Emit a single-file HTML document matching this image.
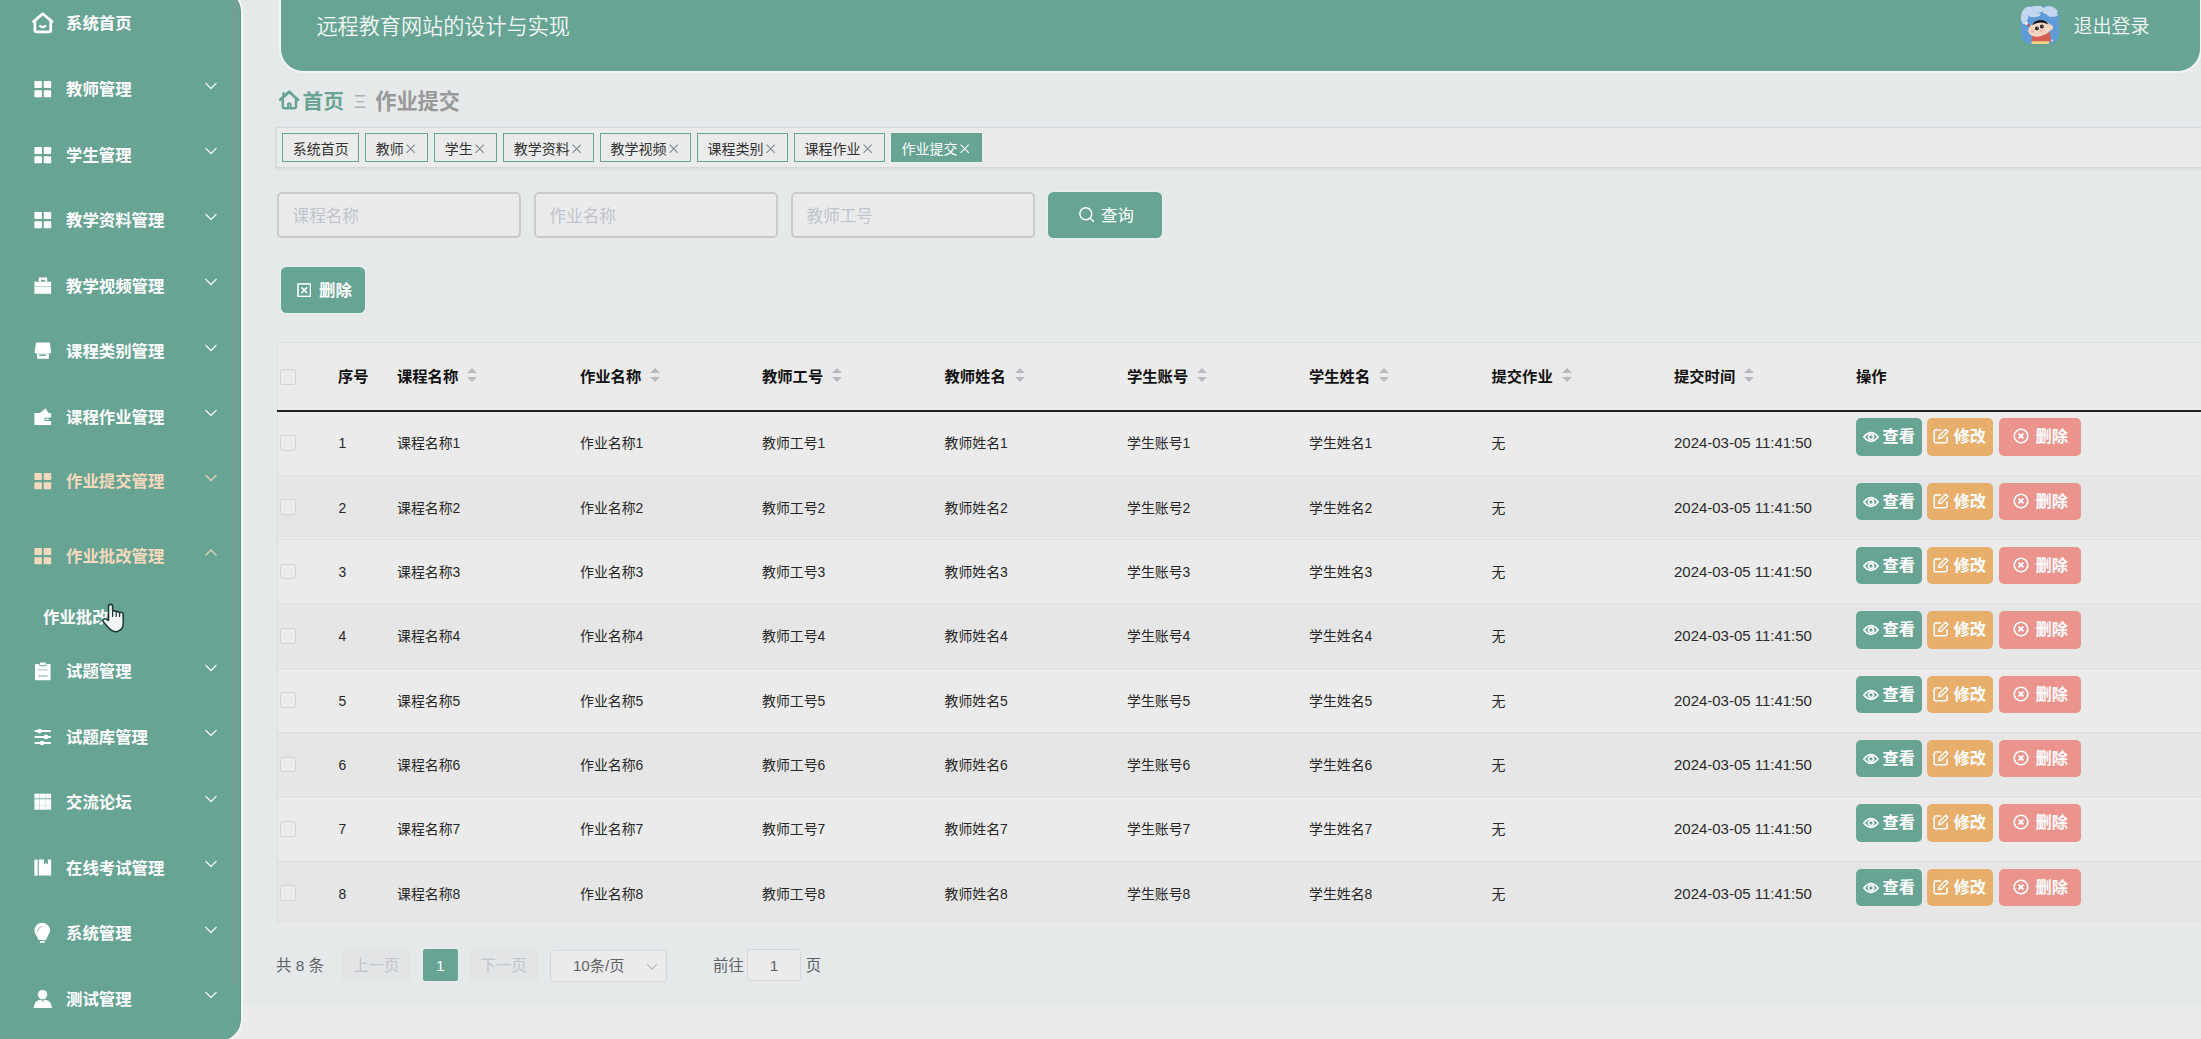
<!DOCTYPE html>
<html lang="zh-CN"><head><meta charset="utf-8"><title>远程教育网站的设计与实现</title>
<style>
*{box-sizing:border-box;margin:0;padding:0}
html,body{width:2201px;height:1039px;overflow:hidden;background:#ebebeb}
body{position:relative;font-family:"Liberation Sans","Noto Sans CJK SC",sans-serif;color:#333;-webkit-font-smoothing:antialiased}
.abs{position:absolute}
#mainbg{position:absolute;left:0;top:0;width:2201px;height:1005px;background:#e6e9ea}
#side{position:absolute;left:-3px;top:-12px;width:246px;height:1055px;background:#68a494;border:2px solid #f4f5f5;border-left:0;border-radius:0 24px 24px 0;box-shadow:-1px 0 0 0 #629789 inset}
#thumb{position:absolute;left:231.5px;top:-10px;width:6.9px;height:995.4px;border-radius:4px;background:rgba(144,147,153,.3)}
.mi{position:absolute;left:0;width:232px;height:30px;color:#fff;font-size:16.4px;font-weight:bold;line-height:30px;white-space:nowrap}
.mi .t{position:absolute;left:66px;top:0}
.mi svg.ic{position:absolute;left:28px;top:1px;width:28px;height:28px;fill:currentColor}
.mi svg.ar{position:absolute;left:204.2px;top:4.8px;width:14px;height:14px;fill:none;stroke:currentColor;stroke-width:1.3;opacity:.88}
.mi.on{color:#f4d9bc}
#head{position:absolute;left:279px;top:-30px;width:1922.6px;height:103px;background:#68a494;border:2px solid #f2f5f5;border-radius:24px}
#title{position:absolute;left:316.4px;top:11.6px;font-size:21.13px;line-height:30px;color:#f4f8f6;font-weight:350;white-space:nowrap}
#avatar{position:absolute;left:2021px;top:6px;width:38px;height:38px;border-radius:10px;overflow:hidden}
#logout{position:absolute;left:2073.6px;top:11.9px;font-size:19px;line-height:30px;color:#f4f8f6;font-weight:350;white-space:nowrap}

#bc{position:absolute;left:279px;top:86.7px;height:30px;line-height:30px;font-size:20.7px;font-weight:bold;white-space:nowrap}
#bc .h{position:absolute;left:23.5px;top:0;color:#68a494}
#bc .s{position:absolute;left:75.3px;top:0.6px;color:#aeb2b8;font-weight:normal;font-size:18px}
#bc .c{position:absolute;left:96.2px;top:0;color:#999;font-size:21.2px}
#bc svg{position:absolute;left:0;top:4px;width:21px;height:21px}
#tags{position:absolute;left:276px;top:127.2px;width:1940px;height:40.6px;background:#ebebeb;border:1px solid #d5d7db;box-shadow:0 1px 3px 0 rgba(0,0,0,.08)}
.tag{position:absolute;top:4.9px;height:29.4px;line-height:31.4px;border:1.3px solid #68a494;box-shadow:0 0 0 .8px rgba(225,245,238,.7);background:#ebebeb;color:#333;font-size:14px;white-space:nowrap;padding:0 9.5px;text-align:left}
.tag.on{background:#68a494;color:#fff}
.tag svg{position:absolute;top:10.3px;width:9.4px;height:9.4px;stroke:#7b868e;stroke-width:1.1;fill:none}
.tag.on svg{stroke:#fff}
.inp{position:absolute;top:191.8px;width:244.4px;height:46.5px;border:2px solid #cbcbcb;border-radius:5px;background:#ebebeb;color:#c0c4cc;font-size:16.6px;line-height:45px;padding-left:13.6px;white-space:nowrap}
.btn{position:absolute;background:#68a494;color:#fff;border-radius:5.5px;white-space:nowrap;box-shadow:0 0 0 1.1px rgba(228,246,240,.75)}
#q{left:1047.6px;top:192px;width:114.4px;height:46.4px;font-size:16.4px;line-height:47.6px}
#q span{position:absolute;left:53.5px;top:0}
#q svg{position:absolute;left:30.2px;top:14px;width:17px;height:17px}
#del{left:281px;top:266.7px;width:84px;height:46.2px;font-size:16.4px;line-height:47px;font-weight:bold}
#del span{position:absolute;left:38px;top:0}
#del svg{position:absolute;left:16px;top:16.2px;width:14.4px;height:14.4px}
#tb{position:absolute;left:276.5px;top:341.5px;width:1940px;height:583.8px;background:#ebebeb;border:1px solid #dcdfe0}
#thb{position:absolute;left:277px;top:409.5px;width:1940px;height:2px;background:#222}
.row{position:absolute;left:278px;width:1940px;height:64.3px;border-top:1px solid #dcdddd;box-shadow:inset 0 -1.5px 0 -.5px #eeeeee}
.row.s{background:#e6e6e6}
.th{position:absolute;top:361.5px;height:30px;line-height:30px;font-size:15.3px;font-weight:bold;color:#111;white-space:nowrap}
.th i{position:absolute;right:-20px;top:6.5px;width:11px;height:17px}
.th i:before,.th i:after{content:"";position:absolute;left:0;border:5.6px solid transparent}
.th i:before{top:-5px;border-bottom-color:#b6b9c0}
.th i:after{top:8.6px;border-top-color:#b6b9c0}
.td{position:absolute;height:30px;line-height:30px;font-size:13.9px;color:#262626;white-space:nowrap}
.td.d{font-size:14.97px;color:#2a2a2a}
.cb{position:absolute;left:280.3px;width:15.8px;height:15.8px;border:1.3px solid #d2d3d5;border-radius:2.4px;background:#ececec}
.ob{position:absolute;height:37.4px;border-radius:5px;color:#fff;font-weight:bold;font-size:16.2px;line-height:37px;white-space:nowrap}
.ob svg{position:absolute;top:10px;width:16px;height:16px}
.ob span{position:absolute;top:0}
.ob.v{left:1856px;width:65.6px;background:#68a494}
.ob.e{left:1927.2px;width:65.6px;background:#e8ae6c}
.ob.x{left:1998.5px;width:82px;background:#eb948e}
.pg{position:absolute;top:949px;height:32.4px;line-height:33.6px;font-size:15.4px;color:#606266;white-space:nowrap}
.pb{background:#e2e4e5;color:#c0c4cc;border-radius:2.2px;text-align:center}
</style></head><body>
<div id="mainbg"></div>
<div id="side"></div>
<div id="thumb"></div>
<div style="position:absolute;left:2px;top:1038.2px;width:222px;height:2px;background:rgba(144,147,153,.28)"></div>
<div class="mi" style="top:7.9px"><svg class="ic" viewBox="28 -14 28 28"><path d="M33.5 -1.4 L42.8 -9.2 L52.1 -1.4" fill="none" stroke="currentColor" stroke-width="2.7" stroke-linecap="round" stroke-linejoin="round"/><path d="M34.9 -2 V7.2 Q34.9 8.8 36.5 8.8 H49.1 Q50.7 8.8 50.7 7.2 V-2" fill="none" stroke="currentColor" stroke-width="2.7"/><path d="M40.3 3.1 Q42.8 5.3 45.3 3.1" fill="none" stroke="currentColor" stroke-width="2.4" stroke-linecap="round"/></svg><span class="t">系统首页</span></div>
<div class="mi" style="top:74.0px"><svg class="ic" viewBox="28 -14 28 28"><rect x="34.4" y="-8" width="7.5" height="7.1" rx=".8"/><rect x="43.7" y="-8" width="7.5" height="7.1" rx=".8"/><rect x="34.4" y="1.2" width="7.5" height="7" rx=".8"/><rect x="43.7" y="1.2" width="7.5" height="7" rx=".8"/></svg><span class="t">教师管理</span><svg class="ar" viewBox="0 0 14 14"><path d="M1.5 4 L7 9.5 L12.5 4"/></svg></div>
<div class="mi" style="top:139.7px"><svg class="ic" viewBox="28 -14 28 28"><rect x="34.4" y="-8" width="7.5" height="7.1" rx=".8"/><rect x="43.7" y="-8" width="7.5" height="7.1" rx=".8"/><rect x="34.4" y="1.2" width="7.5" height="7" rx=".8"/><rect x="43.7" y="1.2" width="7.5" height="7" rx=".8"/></svg><span class="t">学生管理</span><svg class="ar" viewBox="0 0 14 14"><path d="M1.5 4 L7 9.5 L12.5 4"/></svg></div>
<div class="mi" style="top:205.2px"><svg class="ic" viewBox="28 -14 28 28"><rect x="34.4" y="-8" width="7.5" height="7.1" rx=".8"/><rect x="43.7" y="-8" width="7.5" height="7.1" rx=".8"/><rect x="34.4" y="1.2" width="7.5" height="7" rx=".8"/><rect x="43.7" y="1.2" width="7.5" height="7" rx=".8"/></svg><span class="t">教学资料管理</span><svg class="ar" viewBox="0 0 14 14"><path d="M1.5 4 L7 9.5 L12.5 4"/></svg></div>
<div class="mi" style="top:270.7px"><svg class="ic" viewBox="28 -14 28 28"><path d="M38.85 -8.5 H47.1 V-4.3 H45 V-6.3 H41 V-4.3 H38.85 Z"/><rect x="34.4" y="-4.3" width="16.75" height="4.3"/><rect x="34.4" y="0.9" width="16.75" height="6.9"/><rect x="34.4" y="0" width="16.75" height=".9" opacity=".55"/></svg><span class="t">教学视频管理</span><svg class="ar" viewBox="0 0 14 14"><path d="M1.5 4 L7 9.5 L12.5 4"/></svg></div>
<div class="mi" style="top:336.2px"><svg class="ic" viewBox="28 -14 28 28"><path d="M36 -8.5 H49.8 L51.15 1 Q51.15 2.6 49.6 2.6 H36.1 Q34.6 2.6 34.6 1 Z"/><path d="M37.1 2.6 H48.85 V7.7 H37.1 Z M39.2 3.4 V4.9 H46 V3.4 Z" fill-rule="evenodd"/></svg><span class="t">课程类别管理</span><svg class="ar" viewBox="0 0 14 14"><path d="M1.5 4 L7 9.5 L12.5 4"/></svg></div>
<div class="mi" style="top:401.6px"><svg class="ic" viewBox="28 -14 28 28"><path d="M34.4 -3.9 H51.15 V0.4 H46 Q44.2 0.4 44.2 2.2 Q44.2 4 46 4 H51.15 V7.9 H34.4 Z"/><path d="M40 -3.9 L45.6 -8.7 L48.5 -3.9 Z"/><ellipse cx="47.2" cy="2.2" rx="1.7" ry=".9"/></svg><span class="t">课程作业管理</span><svg class="ar" viewBox="0 0 14 14"><path d="M1.5 4 L7 9.5 L12.5 4"/></svg></div>
<div class="mi on" style="top:466.3px"><svg class="ic" viewBox="28 -14 28 28"><rect x="34.4" y="-8" width="7.5" height="7.1" rx=".8"/><rect x="43.7" y="-8" width="7.5" height="7.1" rx=".8"/><rect x="34.4" y="1.2" width="7.5" height="7" rx=".8"/><rect x="43.7" y="1.2" width="7.5" height="7" rx=".8"/></svg><span class="t">作业提交管理</span><svg class="ar" viewBox="0 0 14 14"><path d="M1.5 4 L7 9.5 L12.5 4"/></svg></div>
<div class="mi on" style="top:541.4px"><svg class="ic" viewBox="28 -14 28 28"><rect x="34.4" y="-8" width="7.5" height="7.1" rx=".8"/><rect x="43.7" y="-8" width="7.5" height="7.1" rx=".8"/><rect x="34.4" y="1.2" width="7.5" height="7" rx=".8"/><rect x="43.7" y="1.2" width="7.5" height="7" rx=".8"/></svg><span class="t">作业批改管理</span><svg class="ar" viewBox="0 0 14 14"><path d="M1.5 9.5 L7 4 L12.5 9.5"/></svg></div>
<div class="mi" style="top:656.0px"><svg class="ic" viewBox="28 -14 28 28"><rect x="35" y="-6.9" width="15.6" height="16.1" rx=".8"/><rect x="39.1" y="-8.9" width="7.6" height="4.2" rx="1.6" fill="#68a494"/><rect x="39.7" y="-8.4" width="6.4" height="2.6" rx="1.3"/><rect x="38" y="-1.6" width="9.6" height="1.1" fill="#68a494" opacity=".6"/><rect x="38" y="4.2" width="9.6" height="1.6" fill="#68a494" opacity=".55"/></svg><span class="t">试题管理</span><svg class="ar" viewBox="0 0 14 14"><path d="M1.5 4 L7 9.5 L12.5 4"/></svg></div>
<div class="mi" style="top:721.5px"><svg class="ic" viewBox="28 -14 28 28"><rect x="34.4" y="-6.9" width="16.75" height="2" rx="1"/><rect x="34.4" y="-1.1" width="16.75" height="2" rx="1"/><rect x="34.4" y="5" width="16.75" height="2" rx="1"/><circle cx="39.5" cy="-5.9" r="2.3"/><circle cx="46.1" cy="-.1" r="2.3"/><circle cx="42.1" cy="6" r="2.3"/></svg><span class="t">试题库管理</span><svg class="ar" viewBox="0 0 14 14"><path d="M1.5 4 L7 9.5 L12.5 4"/></svg></div>
<div class="mi" style="top:787.0px"><svg class="ic" viewBox="28 -14 28 28"><rect x="34.4" y="-8.3" width="16.75" height="16"/><rect x="34.4" y="-4.1" width="16.75" height="1.5" fill="#68a494" opacity=".6"/><rect x="34.4" y="2.9" width="16.75" height=".8" fill="#68a494" opacity=".25"/><rect x="39.1" y="-8.3" width=".9" height="16" fill="#68a494" opacity=".3"/><rect x="45.3" y="-8.3" width=".9" height="16" fill="#68a494" opacity=".3"/></svg><span class="t">交流论坛</span><svg class="ar" viewBox="0 0 14 14"><path d="M1.5 4 L7 9.5 L12.5 4"/></svg></div>
<div class="mi" style="top:852.5px"><svg class="ic" viewBox="28 -14 28 28"><rect x="34.4" y="-8.4" width="3.3" height="16"/><path d="M38.8 -8.4 H44 V-3.4 L45.95 -5 L47.9 -3.4 V-8.4 H51.15 V7.6 H38.8 Z"/></svg><span class="t">在线考试管理</span><svg class="ar" viewBox="0 0 14 14"><path d="M1.5 4 L7 9.5 L12.5 4"/></svg></div>
<div class="mi" style="top:918.0px"><svg class="ic" viewBox="28 -14 28 28"><circle cx="42.2" cy="-2.4" r="7.8"/><path d="M36.5 2.5 L38.5 6.9 H46 L48 2.5 Z"/><rect x="39.8" y="7.9" width="5" height="1.9" rx=".9"/><path d="M37.4 -1.8 Q38 -5.6 41.6 -6.6" fill="none" stroke="#68a494" stroke-width="1" opacity=".7" stroke-linecap="round"/></svg><span class="t">系统管理</span><svg class="ar" viewBox="0 0 14 14"><path d="M1.5 4 L7 9.5 L12.5 4"/></svg></div>
<div class="mi" style="top:983.5px"><svg class="ic" viewBox="28 -14 28 28"><circle cx="42.6" cy="-4.4" r="4.7"/><path d="M33.65 8.9 Q34 0.5 42.8 0.5 Q51.6 0.5 51.9 8.9 Z"/><path d="M41.2 0.3 H44.4 L42.8 2.9 Z" fill="#68a494"/></svg><span class="t">测试管理</span><svg class="ar" viewBox="0 0 14 14"><path d="M1.5 4 L7 9.5 L12.5 4"/></svg></div>
<div class="mi" style="top:602.2px"><span class="t" style="left:43px">作业批改</span></div>
<div id="head"></div>
<div id="title">远程教育网站的设计与实现</div>
<div id="avatar"><svg viewBox="0 0 38 38" width="38" height="38"><rect width="38" height="38" fill="#5f9bd6"/><g fill="#dbe7f4" opacity=".8"><ellipse cx="7" cy="5" rx="8" ry="4.6"/><ellipse cx="16" cy="3.2" rx="7" ry="3.6"/><ellipse cx="13" cy="8.6" rx="6.5" ry="2.6"/><ellipse cx="29" cy="4.4" rx="8" ry="4.4"/><ellipse cx="31.5" cy="8.6" rx="5.5" ry="2.2"/><ellipse cx="2.6" cy="11.5" rx="4.6" ry="4.2"/><ellipse cx="4" cy="16.4" rx="3" ry="1.6"/></g><path d="M10.2 23 L6.6 18.2" stroke="#c9505a" stroke-width="1.8"/><circle cx="5.2" cy="17.6" r="1.5" fill="#f1e6ea"/><path d="M10.8 36 Q10 30 14 28 L28 25 Q30.5 30 29.6 36 Z" fill="#d55f55"/><rect x="10.6" y="35.3" width="17.4" height="2.7" fill="#efd88a"/><ellipse cx="29.3" cy="21.6" rx="2.6" ry="2.8" fill="#f3d6c2"/><ellipse cx="18.6" cy="23" rx="11.6" ry="7.3" transform="rotate(-14 18.6 23)" fill="#f3d6c2"/><path d="M11.2 19.6 Q13 14 19.5 13.9 Q25.5 14 27.4 18.6 Q22 15.8 17.4 16.8 Q13.6 17.6 11.2 19.6 Z" fill="#15161a"/><circle cx="15.9" cy="22.4" r="1.9" fill="#1b1b1f"/><circle cx="20.9" cy="20.5" r="1.9" fill="#1b1b1f"/><circle cx="16.3" cy="22" r=".6" fill="#bbb"/><circle cx="21.3" cy="20.1" r=".6" fill="#bbb"/><ellipse cx="11.6" cy="25.2" rx="2" ry="1.5" fill="#f0b5ab"/><ellipse cx="20.6" cy="24.6" rx="2" ry="1.4" fill="#f0b5ab"/><circle cx="31.2" cy="34.6" r="1" fill="#dfe9f3"/></svg></div>
<div id="logout">退出登录</div>
<div id="bc"><svg viewBox="277 88 24 24" style="left:-2px;top:1.3px;width:24px;height:24px" fill="none" stroke="#68a494"><path d="M280.4 99.7 L289.2 91.8 L297.9 99.7" stroke-width="2.9" stroke-linecap="round" stroke-linejoin="round"/><path d="M283.6 96.8 V92.3" stroke-width="2.5"/><path d="M282.8 99 V106.2 Q282.8 108.2 284.8 108.2 H294 Q296 108.2 296 106.2 V99" stroke-width="2.5"/><path d="M288 108.2 V104.5 Q288 103.2 289.3 103.2 Q290.6 103.2 290.6 104.5 V108.2" stroke-width="2.1"/></svg><span class="h">首页</span><span class="s">Ξ</span><span class="c">作业提交</span></div>
<div id="tags">
<span class="tag" style="left:5.2px;width:77.3px">系统首页</span>
<span class="tag" style="left:88.3px;width:63.0px">教师<svg viewBox="0 0 10 10" style="left:40.1px"><path d="M.6 .6 L9.4 9.4 M9.4 .6 L.6 9.4"/></svg></span>
<span class="tag" style="left:157.2px;width:63.0px">学生<svg viewBox="0 0 10 10" style="left:40.1px"><path d="M.6 .6 L9.4 9.4 M9.4 .6 L.6 9.4"/></svg></span>
<span class="tag" style="left:226.2px;width:91.0px">教学资料<svg viewBox="0 0 10 10" style="left:68.1px"><path d="M.6 .6 L9.4 9.4 M9.4 .6 L.6 9.4"/></svg></span>
<span class="tag" style="left:323.0px;width:91.1px">教学视频<svg viewBox="0 0 10 10" style="left:68.1px"><path d="M.6 .6 L9.4 9.4 M9.4 .6 L.6 9.4"/></svg></span>
<span class="tag" style="left:420.1px;width:91.0px">课程类别<svg viewBox="0 0 10 10" style="left:68.1px"><path d="M.6 .6 L9.4 9.4 M9.4 .6 L.6 9.4"/></svg></span>
<span class="tag" style="left:517.0px;width:91.1px">课程作业<svg viewBox="0 0 10 10" style="left:68.1px"><path d="M.6 .6 L9.4 9.4 M9.4 .6 L.6 9.4"/></svg></span>
<span class="tag on" style="left:613.9px;width:91.1px">作业提交<svg viewBox="0 0 10 10" style="left:68.1px"><path d="M.6 .6 L9.4 9.4 M9.4 .6 L.6 9.4"/></svg></span>
</div>
<div class="inp" style="left:277px">课程名称</div>
<div class="inp" style="left:534px">作业名称</div>
<div class="inp" style="left:791px">教师工号</div>
<div class="btn" id="q"><svg viewBox="0 0 17 17"><circle cx="7.8" cy="7.8" r="6" fill="none" stroke="#fff" stroke-width="1.5"/><path d="M12.2 12.2 L15.8 15.8" stroke="#fff" stroke-width="1.5" fill="none"/></svg><span>查询</span></div>
<div class="btn" id="del"><svg viewBox="0 0 15 15"><rect x="1" y="1" width="13" height="13" fill="none" stroke="#fff" stroke-width="1.6"/><path d="M4.6 4.6 L10.4 10.4 M10.4 4.6 L4.6 10.4" stroke="#fff" stroke-width="1.6" fill="none"/></svg><span>删除</span></div>
<div id="tb"></div>
<div class="row" style="top:410.5px"></div>
<div class="row s" style="top:474.8px"></div>
<div class="row" style="top:539.1px"></div>
<div class="row s" style="top:603.4px"></div>
<div class="row" style="top:667.7px"></div>
<div class="row s" style="top:732.0px"></div>
<div class="row" style="top:796.3px"></div>
<div class="row s" style="top:860.6px"></div>
<div id="thb"></div>
<div class="cb" style="top:368.8px"></div>
<div class="th" style="left:338.0px">序号</div>
<div class="th" style="left:397.0px">课程名称<i></i></div>
<div class="th" style="left:580.0px">作业名称<i></i></div>
<div class="th" style="left:762.0px">教师工号<i></i></div>
<div class="th" style="left:944.5px">教师姓名<i></i></div>
<div class="th" style="left:1127.0px">学生账号<i></i></div>
<div class="th" style="left:1309.0px">学生姓名<i></i></div>
<div class="th" style="left:1491.5px">提交作业<i></i></div>
<div class="th" style="left:1674.0px">提交时间<i></i></div>
<div class="th" style="left:1856.0px">操作</div>
<div class="cb" style="top:435.0px"></div>
<div class="td" style="left:338.5px;top:428.4px">1</div>
<div class="td" style="left:397.0px;top:428.4px">课程名称1</div>
<div class="td" style="left:580.0px;top:428.4px">作业名称1</div>
<div class="td" style="left:762.0px;top:428.4px">教师工号1</div>
<div class="td" style="left:944.5px;top:428.4px">教师姓名1</div>
<div class="td" style="left:1127.0px;top:428.4px">学生账号1</div>
<div class="td" style="left:1309.0px;top:428.4px">学生姓名1</div>
<div class="td" style="left:1491.5px;top:428.4px">无</div>
<div class="td d" style="left:1674px;top:428.4px">2024-03-05 11:41:50</div>
<div class="ob v" style="top:418.4px"><svg viewBox="0 0 16 16" style="left:6.5px"><path d="M.9 9 Q8 .3 15.1 9 Q8 17.7 .9 9 Z" fill="none" stroke="#fff" stroke-width="1.7"/><circle cx="8" cy="9" r="2.5" fill="none" stroke="#fff" stroke-width="1.7"/></svg><span style="left:26.5px">查看</span></div>
<div class="ob e" style="top:418.4px"><svg viewBox="0 0 16 16" style="left:6px"><path d="M8 2 H2.6 Q1.2 2 1.2 3.4 V13.4 Q1.2 14.8 2.6 14.8 H12.6 Q14 14.8 14 13.4 V8.5" fill="none" stroke="#fff" stroke-width="1.5"/><path d="M5.6 10.6 L6.2 7.8 L12.8 1.2 L15 3.4 L8.4 10 Z" fill="none" stroke="#fff" stroke-width="1.4" stroke-linejoin="round"/></svg><span style="left:26.5px">修改</span></div>
<div class="ob x" style="top:418.4px"><svg viewBox="0 0 16 16" style="left:14px"><circle cx="8" cy="8" r="6.8" fill="none" stroke="#fff" stroke-width="1.6"/><path d="M5.6 5.6 L10.4 10.4 M10.4 5.6 L5.6 10.4" stroke="#fff" stroke-width="2" fill="none"/></svg><span style="left:37px">删除</span></div>
<div class="cb" style="top:499.3px"></div>
<div class="td" style="left:338.5px;top:492.7px">2</div>
<div class="td" style="left:397.0px;top:492.7px">课程名称2</div>
<div class="td" style="left:580.0px;top:492.7px">作业名称2</div>
<div class="td" style="left:762.0px;top:492.7px">教师工号2</div>
<div class="td" style="left:944.5px;top:492.7px">教师姓名2</div>
<div class="td" style="left:1127.0px;top:492.7px">学生账号2</div>
<div class="td" style="left:1309.0px;top:492.7px">学生姓名2</div>
<div class="td" style="left:1491.5px;top:492.7px">无</div>
<div class="td d" style="left:1674px;top:492.7px">2024-03-05 11:41:50</div>
<div class="ob v" style="top:482.7px"><svg viewBox="0 0 16 16" style="left:6.5px"><path d="M.9 9 Q8 .3 15.1 9 Q8 17.7 .9 9 Z" fill="none" stroke="#fff" stroke-width="1.7"/><circle cx="8" cy="9" r="2.5" fill="none" stroke="#fff" stroke-width="1.7"/></svg><span style="left:26.5px">查看</span></div>
<div class="ob e" style="top:482.7px"><svg viewBox="0 0 16 16" style="left:6px"><path d="M8 2 H2.6 Q1.2 2 1.2 3.4 V13.4 Q1.2 14.8 2.6 14.8 H12.6 Q14 14.8 14 13.4 V8.5" fill="none" stroke="#fff" stroke-width="1.5"/><path d="M5.6 10.6 L6.2 7.8 L12.8 1.2 L15 3.4 L8.4 10 Z" fill="none" stroke="#fff" stroke-width="1.4" stroke-linejoin="round"/></svg><span style="left:26.5px">修改</span></div>
<div class="ob x" style="top:482.7px"><svg viewBox="0 0 16 16" style="left:14px"><circle cx="8" cy="8" r="6.8" fill="none" stroke="#fff" stroke-width="1.6"/><path d="M5.6 5.6 L10.4 10.4 M10.4 5.6 L5.6 10.4" stroke="#fff" stroke-width="2" fill="none"/></svg><span style="left:37px">删除</span></div>
<div class="cb" style="top:563.6px"></div>
<div class="td" style="left:338.5px;top:557.0px">3</div>
<div class="td" style="left:397.0px;top:557.0px">课程名称3</div>
<div class="td" style="left:580.0px;top:557.0px">作业名称3</div>
<div class="td" style="left:762.0px;top:557.0px">教师工号3</div>
<div class="td" style="left:944.5px;top:557.0px">教师姓名3</div>
<div class="td" style="left:1127.0px;top:557.0px">学生账号3</div>
<div class="td" style="left:1309.0px;top:557.0px">学生姓名3</div>
<div class="td" style="left:1491.5px;top:557.0px">无</div>
<div class="td d" style="left:1674px;top:557.0px">2024-03-05 11:41:50</div>
<div class="ob v" style="top:547.0px"><svg viewBox="0 0 16 16" style="left:6.5px"><path d="M.9 9 Q8 .3 15.1 9 Q8 17.7 .9 9 Z" fill="none" stroke="#fff" stroke-width="1.7"/><circle cx="8" cy="9" r="2.5" fill="none" stroke="#fff" stroke-width="1.7"/></svg><span style="left:26.5px">查看</span></div>
<div class="ob e" style="top:547.0px"><svg viewBox="0 0 16 16" style="left:6px"><path d="M8 2 H2.6 Q1.2 2 1.2 3.4 V13.4 Q1.2 14.8 2.6 14.8 H12.6 Q14 14.8 14 13.4 V8.5" fill="none" stroke="#fff" stroke-width="1.5"/><path d="M5.6 10.6 L6.2 7.8 L12.8 1.2 L15 3.4 L8.4 10 Z" fill="none" stroke="#fff" stroke-width="1.4" stroke-linejoin="round"/></svg><span style="left:26.5px">修改</span></div>
<div class="ob x" style="top:547.0px"><svg viewBox="0 0 16 16" style="left:14px"><circle cx="8" cy="8" r="6.8" fill="none" stroke="#fff" stroke-width="1.6"/><path d="M5.6 5.6 L10.4 10.4 M10.4 5.6 L5.6 10.4" stroke="#fff" stroke-width="2" fill="none"/></svg><span style="left:37px">删除</span></div>
<div class="cb" style="top:627.9px"></div>
<div class="td" style="left:338.5px;top:621.3px">4</div>
<div class="td" style="left:397.0px;top:621.3px">课程名称4</div>
<div class="td" style="left:580.0px;top:621.3px">作业名称4</div>
<div class="td" style="left:762.0px;top:621.3px">教师工号4</div>
<div class="td" style="left:944.5px;top:621.3px">教师姓名4</div>
<div class="td" style="left:1127.0px;top:621.3px">学生账号4</div>
<div class="td" style="left:1309.0px;top:621.3px">学生姓名4</div>
<div class="td" style="left:1491.5px;top:621.3px">无</div>
<div class="td d" style="left:1674px;top:621.3px">2024-03-05 11:41:50</div>
<div class="ob v" style="top:611.3px"><svg viewBox="0 0 16 16" style="left:6.5px"><path d="M.9 9 Q8 .3 15.1 9 Q8 17.7 .9 9 Z" fill="none" stroke="#fff" stroke-width="1.7"/><circle cx="8" cy="9" r="2.5" fill="none" stroke="#fff" stroke-width="1.7"/></svg><span style="left:26.5px">查看</span></div>
<div class="ob e" style="top:611.3px"><svg viewBox="0 0 16 16" style="left:6px"><path d="M8 2 H2.6 Q1.2 2 1.2 3.4 V13.4 Q1.2 14.8 2.6 14.8 H12.6 Q14 14.8 14 13.4 V8.5" fill="none" stroke="#fff" stroke-width="1.5"/><path d="M5.6 10.6 L6.2 7.8 L12.8 1.2 L15 3.4 L8.4 10 Z" fill="none" stroke="#fff" stroke-width="1.4" stroke-linejoin="round"/></svg><span style="left:26.5px">修改</span></div>
<div class="ob x" style="top:611.3px"><svg viewBox="0 0 16 16" style="left:14px"><circle cx="8" cy="8" r="6.8" fill="none" stroke="#fff" stroke-width="1.6"/><path d="M5.6 5.6 L10.4 10.4 M10.4 5.6 L5.6 10.4" stroke="#fff" stroke-width="2" fill="none"/></svg><span style="left:37px">删除</span></div>
<div class="cb" style="top:692.2px"></div>
<div class="td" style="left:338.5px;top:685.6px">5</div>
<div class="td" style="left:397.0px;top:685.6px">课程名称5</div>
<div class="td" style="left:580.0px;top:685.6px">作业名称5</div>
<div class="td" style="left:762.0px;top:685.6px">教师工号5</div>
<div class="td" style="left:944.5px;top:685.6px">教师姓名5</div>
<div class="td" style="left:1127.0px;top:685.6px">学生账号5</div>
<div class="td" style="left:1309.0px;top:685.6px">学生姓名5</div>
<div class="td" style="left:1491.5px;top:685.6px">无</div>
<div class="td d" style="left:1674px;top:685.6px">2024-03-05 11:41:50</div>
<div class="ob v" style="top:675.6px"><svg viewBox="0 0 16 16" style="left:6.5px"><path d="M.9 9 Q8 .3 15.1 9 Q8 17.7 .9 9 Z" fill="none" stroke="#fff" stroke-width="1.7"/><circle cx="8" cy="9" r="2.5" fill="none" stroke="#fff" stroke-width="1.7"/></svg><span style="left:26.5px">查看</span></div>
<div class="ob e" style="top:675.6px"><svg viewBox="0 0 16 16" style="left:6px"><path d="M8 2 H2.6 Q1.2 2 1.2 3.4 V13.4 Q1.2 14.8 2.6 14.8 H12.6 Q14 14.8 14 13.4 V8.5" fill="none" stroke="#fff" stroke-width="1.5"/><path d="M5.6 10.6 L6.2 7.8 L12.8 1.2 L15 3.4 L8.4 10 Z" fill="none" stroke="#fff" stroke-width="1.4" stroke-linejoin="round"/></svg><span style="left:26.5px">修改</span></div>
<div class="ob x" style="top:675.6px"><svg viewBox="0 0 16 16" style="left:14px"><circle cx="8" cy="8" r="6.8" fill="none" stroke="#fff" stroke-width="1.6"/><path d="M5.6 5.6 L10.4 10.4 M10.4 5.6 L5.6 10.4" stroke="#fff" stroke-width="2" fill="none"/></svg><span style="left:37px">删除</span></div>
<div class="cb" style="top:756.5px"></div>
<div class="td" style="left:338.5px;top:749.9px">6</div>
<div class="td" style="left:397.0px;top:749.9px">课程名称6</div>
<div class="td" style="left:580.0px;top:749.9px">作业名称6</div>
<div class="td" style="left:762.0px;top:749.9px">教师工号6</div>
<div class="td" style="left:944.5px;top:749.9px">教师姓名6</div>
<div class="td" style="left:1127.0px;top:749.9px">学生账号6</div>
<div class="td" style="left:1309.0px;top:749.9px">学生姓名6</div>
<div class="td" style="left:1491.5px;top:749.9px">无</div>
<div class="td d" style="left:1674px;top:749.9px">2024-03-05 11:41:50</div>
<div class="ob v" style="top:739.9px"><svg viewBox="0 0 16 16" style="left:6.5px"><path d="M.9 9 Q8 .3 15.1 9 Q8 17.7 .9 9 Z" fill="none" stroke="#fff" stroke-width="1.7"/><circle cx="8" cy="9" r="2.5" fill="none" stroke="#fff" stroke-width="1.7"/></svg><span style="left:26.5px">查看</span></div>
<div class="ob e" style="top:739.9px"><svg viewBox="0 0 16 16" style="left:6px"><path d="M8 2 H2.6 Q1.2 2 1.2 3.4 V13.4 Q1.2 14.8 2.6 14.8 H12.6 Q14 14.8 14 13.4 V8.5" fill="none" stroke="#fff" stroke-width="1.5"/><path d="M5.6 10.6 L6.2 7.8 L12.8 1.2 L15 3.4 L8.4 10 Z" fill="none" stroke="#fff" stroke-width="1.4" stroke-linejoin="round"/></svg><span style="left:26.5px">修改</span></div>
<div class="ob x" style="top:739.9px"><svg viewBox="0 0 16 16" style="left:14px"><circle cx="8" cy="8" r="6.8" fill="none" stroke="#fff" stroke-width="1.6"/><path d="M5.6 5.6 L10.4 10.4 M10.4 5.6 L5.6 10.4" stroke="#fff" stroke-width="2" fill="none"/></svg><span style="left:37px">删除</span></div>
<div class="cb" style="top:820.8px"></div>
<div class="td" style="left:338.5px;top:814.2px">7</div>
<div class="td" style="left:397.0px;top:814.2px">课程名称7</div>
<div class="td" style="left:580.0px;top:814.2px">作业名称7</div>
<div class="td" style="left:762.0px;top:814.2px">教师工号7</div>
<div class="td" style="left:944.5px;top:814.2px">教师姓名7</div>
<div class="td" style="left:1127.0px;top:814.2px">学生账号7</div>
<div class="td" style="left:1309.0px;top:814.2px">学生姓名7</div>
<div class="td" style="left:1491.5px;top:814.2px">无</div>
<div class="td d" style="left:1674px;top:814.2px">2024-03-05 11:41:50</div>
<div class="ob v" style="top:804.2px"><svg viewBox="0 0 16 16" style="left:6.5px"><path d="M.9 9 Q8 .3 15.1 9 Q8 17.7 .9 9 Z" fill="none" stroke="#fff" stroke-width="1.7"/><circle cx="8" cy="9" r="2.5" fill="none" stroke="#fff" stroke-width="1.7"/></svg><span style="left:26.5px">查看</span></div>
<div class="ob e" style="top:804.2px"><svg viewBox="0 0 16 16" style="left:6px"><path d="M8 2 H2.6 Q1.2 2 1.2 3.4 V13.4 Q1.2 14.8 2.6 14.8 H12.6 Q14 14.8 14 13.4 V8.5" fill="none" stroke="#fff" stroke-width="1.5"/><path d="M5.6 10.6 L6.2 7.8 L12.8 1.2 L15 3.4 L8.4 10 Z" fill="none" stroke="#fff" stroke-width="1.4" stroke-linejoin="round"/></svg><span style="left:26.5px">修改</span></div>
<div class="ob x" style="top:804.2px"><svg viewBox="0 0 16 16" style="left:14px"><circle cx="8" cy="8" r="6.8" fill="none" stroke="#fff" stroke-width="1.6"/><path d="M5.6 5.6 L10.4 10.4 M10.4 5.6 L5.6 10.4" stroke="#fff" stroke-width="2" fill="none"/></svg><span style="left:37px">删除</span></div>
<div class="cb" style="top:885.1px"></div>
<div class="td" style="left:338.5px;top:878.5px">8</div>
<div class="td" style="left:397.0px;top:878.5px">课程名称8</div>
<div class="td" style="left:580.0px;top:878.5px">作业名称8</div>
<div class="td" style="left:762.0px;top:878.5px">教师工号8</div>
<div class="td" style="left:944.5px;top:878.5px">教师姓名8</div>
<div class="td" style="left:1127.0px;top:878.5px">学生账号8</div>
<div class="td" style="left:1309.0px;top:878.5px">学生姓名8</div>
<div class="td" style="left:1491.5px;top:878.5px">无</div>
<div class="td d" style="left:1674px;top:878.5px">2024-03-05 11:41:50</div>
<div class="ob v" style="top:868.5px"><svg viewBox="0 0 16 16" style="left:6.5px"><path d="M.9 9 Q8 .3 15.1 9 Q8 17.7 .9 9 Z" fill="none" stroke="#fff" stroke-width="1.7"/><circle cx="8" cy="9" r="2.5" fill="none" stroke="#fff" stroke-width="1.7"/></svg><span style="left:26.5px">查看</span></div>
<div class="ob e" style="top:868.5px"><svg viewBox="0 0 16 16" style="left:6px"><path d="M8 2 H2.6 Q1.2 2 1.2 3.4 V13.4 Q1.2 14.8 2.6 14.8 H12.6 Q14 14.8 14 13.4 V8.5" fill="none" stroke="#fff" stroke-width="1.5"/><path d="M5.6 10.6 L6.2 7.8 L12.8 1.2 L15 3.4 L8.4 10 Z" fill="none" stroke="#fff" stroke-width="1.4" stroke-linejoin="round"/></svg><span style="left:26.5px">修改</span></div>
<div class="ob x" style="top:868.5px"><svg viewBox="0 0 16 16" style="left:14px"><circle cx="8" cy="8" r="6.8" fill="none" stroke="#fff" stroke-width="1.6"/><path d="M5.6 5.6 L10.4 10.4 M10.4 5.6 L5.6 10.4" stroke="#fff" stroke-width="2" fill="none"/></svg><span style="left:37px">删除</span></div>
<div class="pg" style="left:276px">共 8 条</div>
<div class="pg pb" style="left:341.7px;width:69.3px">上一页</div>
<div class="pg" style="left:422.7px;width:35px;background:#68a494;color:#fff;text-align:center;border-radius:2.2px">1</div>
<div class="pg pb" style="left:469px;width:69.3px">下一页</div>
<div class="pg" style="left:550.1px;top:950.1px;width:116.5px;height:32.2px;border:1.2px solid #d3d6dc;border-radius:3.6px;background:#ebebeb;line-height:30.6px"><span style="position:absolute;left:21.8px;font-size:15.2px">10条/页</span><svg viewBox="0 0 12 12" style="position:absolute;left:95px;top:9.6px;width:12px;height:12px"><path d="M1.2 3.4 L6 8.2 L10.8 3.4" fill="none" stroke="#b7bcc6" stroke-width="1.2"/></svg></div>
<div class="pg" style="left:713px">前往</div>
<div class="pg" style="left:747.3px;top:949.2px;width:53.4px;height:32.2px;border:1.2px solid #d3d6dc;border-radius:3.6px;background:#ebebeb;text-align:center;line-height:31px">1</div>
<div class="pg" style="left:805.7px">页</div>
<svg style="position:absolute;left:90px;top:595px;width:50px;height:50px" viewBox="0 0 1039 1039"><path d="M385 240 Q385 195 427 195 Q470 195 470 240 V335 Q508 312 545 347 Q580 328 615 367 Q690 342 690 412 V590 Q690 700 600 745 Q520 790 440 730 Q380 680 280 560 Q250 520 285 500 Q320 480 385 530 Z" fill="#f3f4f4" stroke="#1c3833" stroke-width="32" stroke-linejoin="round"/><path d="M470 335 V445 M545 350 V445 M615 370 V445" stroke="#1c3833" stroke-width="26" fill="none" stroke-linecap="round"/></svg>
</body></html>
